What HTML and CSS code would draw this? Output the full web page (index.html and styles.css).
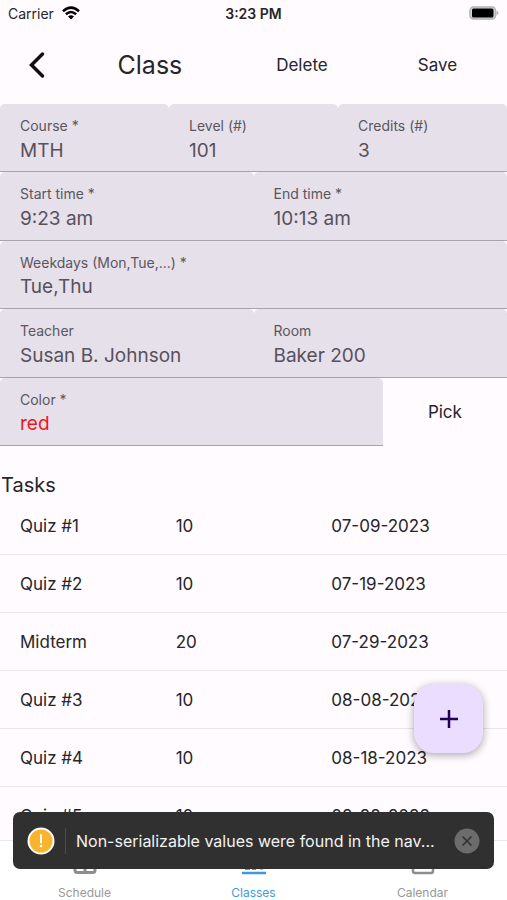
FILE: index.html
```html
<!DOCTYPE html>
<html lang="en">
<head>
<meta charset="utf-8">
<meta name="viewport" content="width=device-width, initial-scale=1">
<title>Class</title>
<link rel="stylesheet" href="styles.css">
</head>
<body>
<div class="app">
  <div class="status">
    <div class="carrier">Carrier
      <svg width="18" height="14" viewBox="0 0 18 14" aria-hidden="true"><g fill="none" stroke="#000" stroke-width="2.5"><path d="M1 5.2Q9-2 17 5.2"/><path d="M3.9 8.3Q9 3.7 14.1 8.3"/></g><path d="M6 10.5Q9 8.1 12 10.5L9 13.5Z"/></svg>
    </div>
    <time class="clock">3:23 PM</time>
    <div class="battery">
      <svg width="30" height="14" viewBox="0 0 30 14" role="img" aria-label="Battery full"><rect x="1" y="1" width="25.500" height="12" rx="3.5" fill="#d9d6da" stroke="#b5b2b6" stroke-width="1.5"/><rect x="3" y="2.5" width="21.500" height="9" rx="1.500"/><path d="M27.500 4.500Q31.500 7 27.500 9.500Z" fill="#b5b2b6"/></svg>
    </div>
  </div>

  <header class="header">
    <button class="back" type="button" aria-label="Back">
      <svg width="16" height="28" viewBox="0 0 16 28" aria-hidden="true"><path d="M13.500 3L2.500 14L13.500 25" fill="none" stroke="#111" stroke-width="3.500" stroke-linecap="round" stroke-linejoin="miter"/></svg>
    </button>
    <h1>Class</h1>
    <button class="action" type="button">Delete</button>
    <button class="action" type="button">Save</button>
  </header>

  <form class="fields">
    <div class="row">
      <label class="field"><span>Course *</span><input type="text" value="MTH"></label>
      <label class="field"><span>Level (#)</span><input type="text" value="101"></label>
      <label class="field"><span>Credits (#)</span><input type="text" value="3"></label>
    </div>
    <div class="row">
      <label class="field"><span>Start time *</span><input type="text" value="9:23 am"></label>
      <label class="field"><span>End time *</span><input type="text" value="10:13 am"></label>
    </div>
    <div class="row">
      <label class="field"><span>Weekdays (Mon,Tue,...) *</span><input type="text" value="Tue,Thu"></label>
    </div>
    <div class="row">
      <label class="field"><span>Teacher</span><input type="text" value="Susan B. Johnson"></label>
      <label class="field"><span>Room</span><input type="text" value="Baker 200"></label>
    </div>
    <div class="row">
      <label class="field color"><span>Color *</span><input type="text" value="red"></label>
      <button class="pick" type="button">Pick</button>
    </div>
  </form>

  <main class="tasks">
    <h2>Tasks</h2>
    <table>
      <tbody>
        <tr><td>Quiz #1</td><td>10</td><td>07-09-2023</td></tr>
        <tr><td>Quiz #2</td><td>10</td><td>07-19-2023</td></tr>
        <tr><td>Midterm</td><td>20</td><td>07-29-2023</td></tr>
        <tr><td>Quiz #3</td><td>10</td><td>08-08-2023</td></tr>
        <tr><td>Quiz #4</td><td>10</td><td>08-18-2023</td></tr>
        <tr><td>Quiz #5</td><td>10</td><td>08-28-2023</td></tr>
      </tbody>
    </table>
  </main>

  <nav class="tabs">
    <a href="#schedule">
      <svg width="24" height="26" viewBox="0 0 24 26" aria-hidden="true"><path d="M2 4H22V21Q22 23.500 20 23.500H4Q2 23.500 2 21ZM2 10H22M2 17H22M12 10V23" fill="none" stroke="#8e8d90" stroke-width="3"/></svg>
      Schedule
    </a>
    <a href="#classes" class="active">
      <svg width="24" height="26" viewBox="0 0 24 26" aria-hidden="true"><path d="M0 24H24" stroke="#3d9bdc" stroke-width="2.500"/><path d="M3 8H8V21H3ZM10 4H14V21H10ZM16 8L19 7L22 20L18.500 21Z" fill="#3d9bdc"/></svg>
      Classes
    </a>
    <a href="#calendar">
      <svg width="24" height="26" viewBox="0 0 24 26" aria-hidden="true"><path d="M2 5H22V22Q22 24 20 24H4Q2 24 2 22ZM2 10H22M7 1V5M17 1V5" fill="none" stroke="#8e8d90" stroke-width="2.500"/></svg>
      Calendar
    </a>
  </nav>

  <button class="fab" type="button" aria-label="Add task">
    <svg width="18" height="18" viewBox="0 0 18 18" aria-hidden="true"><path d="M9 0V18M0 9H18" stroke="#21005d" stroke-width="2.500"/></svg>
  </button>

  <div class="toast" role="alert">
    <svg class="warn" width="28" height="28" viewBox="0 0 28 28" aria-hidden="true"><circle cx="14" cy="14" r="12.500" fill="#f7b42c" stroke="#fff" stroke-width="2"/><path d="M14 8V15.500" stroke="#fff" stroke-width="2" stroke-linecap="round"/><circle cx="14" cy="19" r="1.300" fill="#fff"/></svg>
    <p>Non-serializable values were found in the nav...</p>
    <button class="dismiss" type="button" aria-label="Dismiss">
      <svg width="26" height="26" viewBox="0 0 26 26" aria-hidden="true"><circle cx="13" cy="13" r="12.500" fill="#6c6c6c"/><path d="M8.500 8.500L17.500 17.500M17.500 8.500L8.500 17.500" stroke="#303030" stroke-width="1.500"/></svg>
    </button>
  </div>
</div>
</body>
</html>
```
FILE: styles.css
```css
* {
  box-sizing: border-box;
}

body {
  margin: 0;
  background: #fffbfe;
  color: #26252a;
  font-family: Inter, "Liberation Sans", sans-serif;
  font-size: 17px;
}

button {
  padding: 0;
  border: 0;
  background: none;
  color: inherit;
  font: inherit;
  cursor: pointer;
}

svg {
  display: block;
  flex: none;
}

h1,
h2,
p {
  margin: 0;
  font-weight: 400;
}

.app {
  position: relative;
  display: flex;
  flex-direction: column;
  height: 100vh;
  overflow: hidden;
}

.status {
  display: grid;
  grid-template-columns: 1fr auto 1fr;
  align-items: center;
  flex: none;
  height: 26px;
  padding: 0 8px;
  font-size: 14px;
}

.carrier {
  display: flex;
  align-items: center;
  gap: 8px;
}

.clock {
  font-weight: 600;
}

.battery {
  justify-self: end;
}

.header {
  display: grid;
  grid-template-columns: 30fr 65fr 53fr 56fr;
  align-items: center;
  flex: none;
  height: 78px;
}

.back {
  justify-self: center;
}

.header h1 {
  padding-left: 43px;
  font-size: 25px;
}

.action {
  padding: 8px 0;
}

.fields {
  display: grid;
  grid-auto-rows: 1fr;
  flex: none;
  min-height: 342px;
}

.row {
  display: flex;
}

.field {
  display: flex;
  flex: 1;
  flex-direction: column;
  min-width: 0;
  padding: 13px 20px 0;
  border-bottom: 1px solid #a8a2ac;
  border-radius: 5px 5px 0 0;
  background: #e6e0ea;
  color: #5b5660;
}

.field span {
  font-size: 14px;
  line-height: 18px;
}

.field input {
  width: 100%;
  height: 30px;
  padding: 0;
  border: 0;
  outline: 0;
  background: none;
  color: #57515b;
  font: inherit;
  font-size: 19px;
}

.field.color {
  flex: 0 0 75.5%;
}

.field.color input {
  color: #f5121c;
}

.pick {
  flex: 1;
}

.tasks {
  flex: 1;
  min-height: 0;
  padding-top: 27px;
  overflow: hidden;
}

.tasks h2 {
  padding-left: 1px;
  font-size: 20px;
  line-height: 24px;
}

table,
tbody {
  display: block;
}

tr {
  display: flex;
  align-items: center;
  height: 58px;
  padding: 0 20px;
  border-bottom: 1px solid #e9e5ea;
}

td {
  flex: 1;
  padding: 0;
}

.tabs {
  display: flex;
  flex: none;
  height: 60px;
  border-top: 1px solid #e9e7ea;
  background: #fff;
}

.tabs a {
  display: flex;
  flex: 1;
  flex-direction: column;
  align-items: center;
  gap: 10px;
  padding-top: 8px;
  color: #98979a;
  font-size: 12px;
  line-height: 16px;
  text-decoration: none;
}

.tabs .active {
  color: #3d9bdc;
}

.fab {
  position: absolute;
  right: 24px;
  bottom: 147px;
  display: grid;
  place-items: center;
  width: 69px;
  height: 69px;
  border-radius: 20px;
  background: #eaddff;
  box-shadow: 0 2px 8px rgba(0, 0, 0, 0.35);
}

.toast {
  position: absolute;
  right: 13px;
  bottom: 31px;
  left: 13px;
  display: flex;
  align-items: center;
  height: 57px;
  padding: 0 14px;
  border-radius: 7px;
  background: #303030;
  color: #f3f3f3;
  font-size: 16px;
}

.toast p {
  flex: 1;
  min-width: 0;
  margin: 0 8px 0 10px;
  padding-left: 10px;
  border-left: 1px solid #4c4c4c;
  line-height: 26px;
  overflow: hidden;
  text-overflow: ellipsis;
  white-space: nowrap;
}
```
